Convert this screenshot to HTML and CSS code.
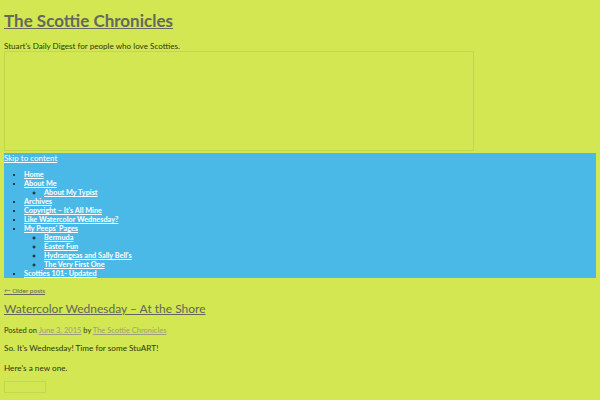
FILE: index.html
```html
<!DOCTYPE html>
<html lang="en">
<head>
  <meta charset="UTF-8">
  <title>The Scottie Chronicles</title>
  <link rel="stylesheet" href="styles.css">
</head>
<body>
  <header class="site-header">
    <h1 class="site-title"><a href="#">The Scottie Chronicles</a></h1>
    <p class="site-description">Stuart's Daily Digest for people who love Scotties.</p>
    <div class="header-image"></div>
  </header>

  <nav class="main-nav">
    <a class="skip-link" href="#">Skip to content</a>
    <ul class="menu">
      <li><a href="#">Home</a></li>
      <li><a href="#">About Me</a>
        <ul>
          <li><a href="#">About My Typist</a></li>
        </ul>
      </li>
      <li><a href="#">Archives</a></li>
      <li><a href="#">Copyright – It's All Mine</a></li>
      <li><a href="#">Like Watercolor Wednesday?</a></li>
      <li><a href="#">My Peeps' Pages</a>
        <ul>
          <li><a href="#">Bermuda</a></li>
          <li><a href="#">Easter Fun</a></li>
          <li><a href="#">Hydrangeas and Sally Bell's</a></li>
          <li><a href="#">The Very First One</a></li>
        </ul>
      </li>
      <li><a href="#">Scotties 101- Updated</a></li>
    </ul>
  </nav>

  <main class="content">
    <div class="older"><a href="#">← Older posts</a></div>
    <article class="post">
      <h2 class="post-title"><a href="#">Watercolor Wednesday – At the Shore</a></h2>
      <p class="post-meta">Posted on <a href="#">June 3, 2015</a> by <a href="#">The Scottie Chronicles</a></p>
      <p>So. It's Wednesday! Time for some StuART!</p>
      <p>Here's a new one.</p>
      <div class="post-image"></div>
    </article>
  </main>
</body>
</html>
```

FILE: styles.css
```css
* {
  box-sizing: border-box;
}

body {
  margin: 0;
  padding: 0 4px;
  background: #d2e751;
  font-family: Lato, "Open Sans", sans-serif;
  color: #2f3a10;
  font-size: 8.2px;
}

a {
  color: #6a6e5a;
}

.site-title {
  margin: 0;
  padding-top: 11px;
  font-size: 17px;
  line-height: 19px;
  font-weight: 700;
}

.site-title a {
  color: #66675e;
}

.site-description {
  margin: 12px 0 0;
  line-height: 9px;
  font-size: 8.1px;
}

.header-image {
  width: 470px;
  height: 100px;
  border: 1px solid #c3d652;
}

.main-nav {
  margin-top: 2px;
  background: #4bb9e8;
}

.skip-link {
  display: block;
  color: #fff;
  font-size: 8px;
  line-height: 10px;
}

.menu {
  margin: 7px 0 0;
  padding-left: 20px;
  font-size: 7.3px;
  line-height: 9px;
  font-weight: 700;
}

.menu ul {
  margin: 0;
  padding-left: 20px;
  list-style: circle;
}

.menu li::marker {
  color: #111;
}

.menu a {
  color: #fff;
}

.content {
  padding-top: 8px;
}

.older {
  font-size: 6.5px;
  line-height: 9px;
}

.older a {
  color: #62675a;
}

.post-title {
  margin: 6px 0 0;
  font-size: 12px;
  line-height: 16px;
  font-weight: 400;
}

.post-title a {
  color: #63665e;
}

.post p {
  margin: 0 0 10px;
  line-height: 10px;
}

.post .post-meta {
  margin: 9px 0 7px;
  font-size: 7.5px;
}

.post-meta a {
  color: #9aa17a;
}

.post-image {
  margin-top: -2px;
  width: 42px;
  height: 12px;
  border: 1px solid #c3d652;
}
```
